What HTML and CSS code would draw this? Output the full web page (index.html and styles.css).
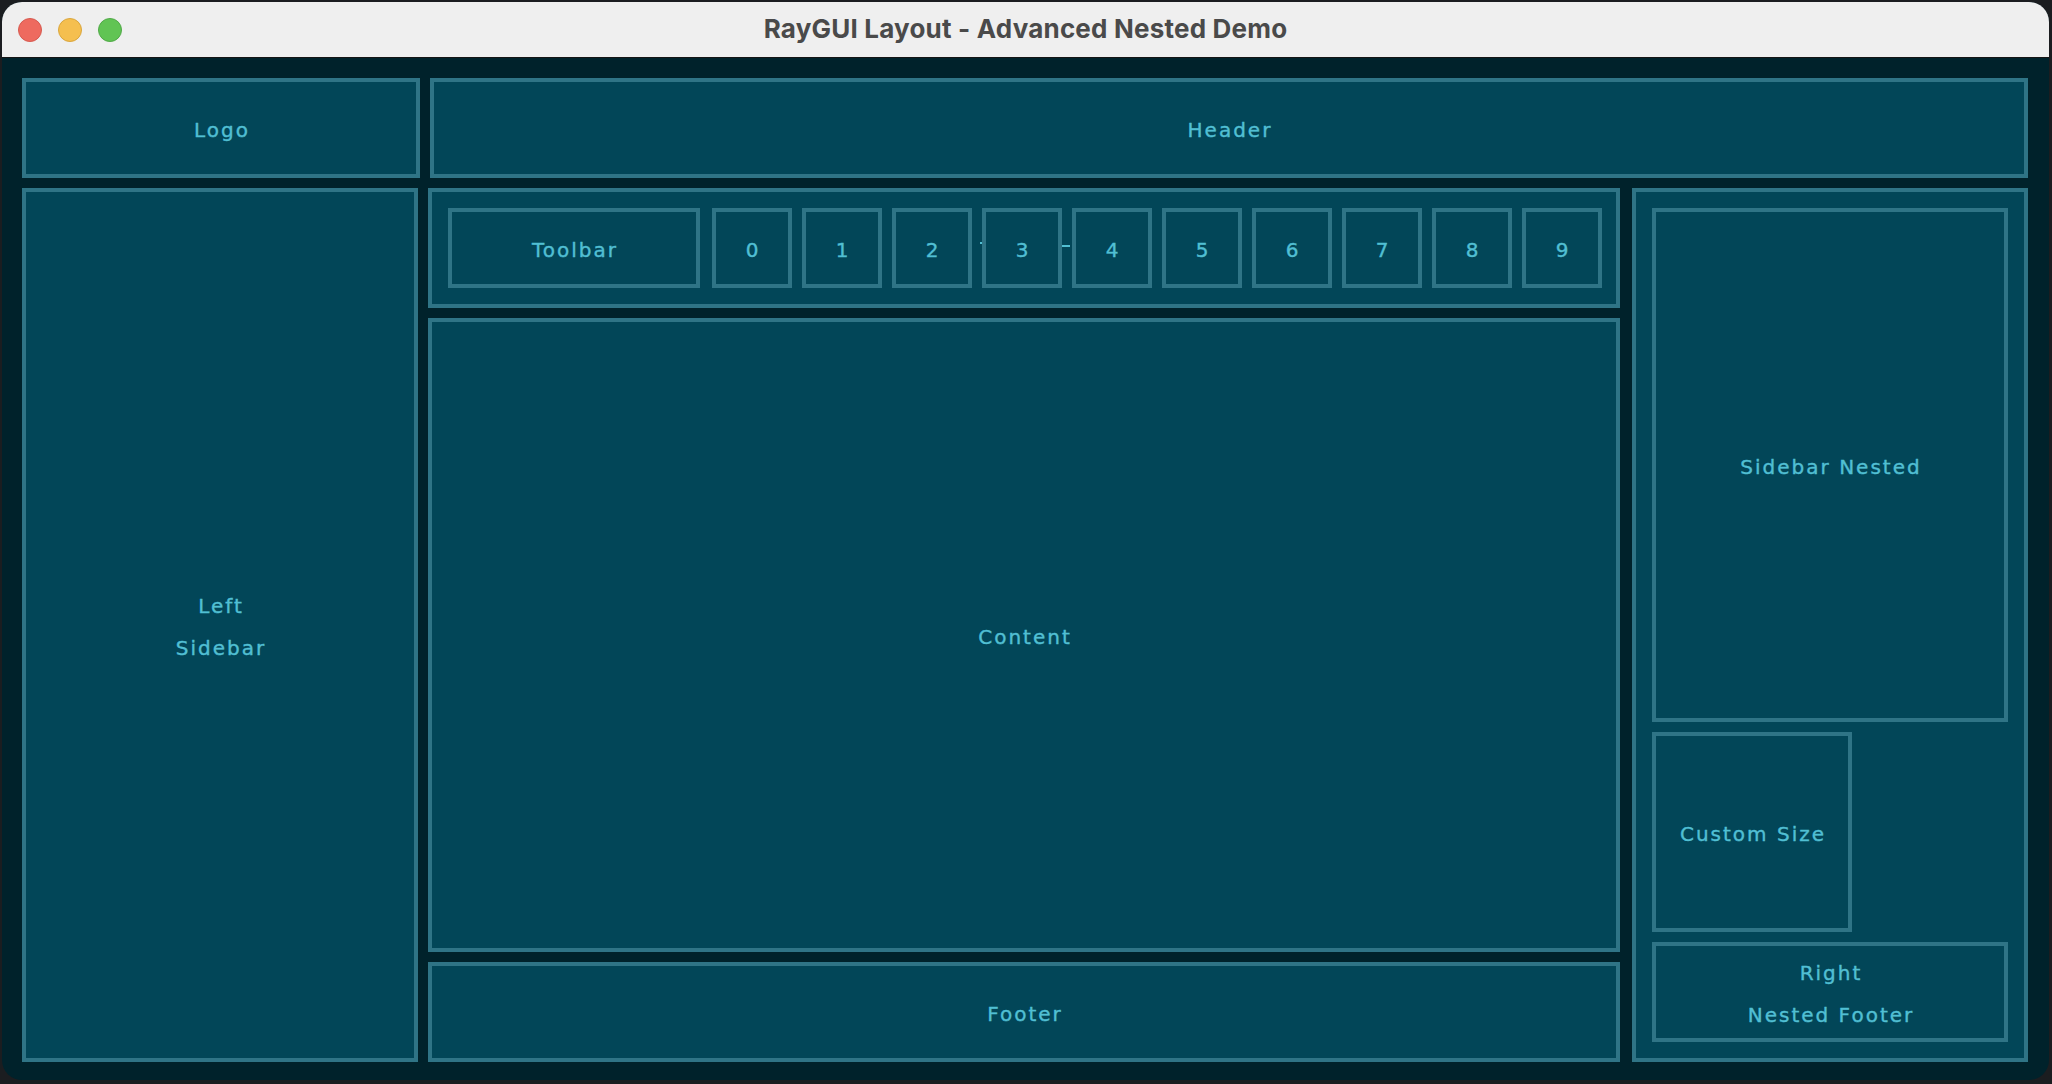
FILE: index.html
```html
<!DOCTYPE html>
<html>
<head>
<meta charset="utf-8">
<title>RayGUI Layout - Advanced Nested Demo</title>
<link rel="stylesheet" href="styles.css">
</head>
<body>
<div class="window">
  <div class="titlebar">
    <div class="lights">
      <span class="light red"></span>
      <span class="light yellow"></span>
      <span class="light green"></span>
    </div>
    <div class="title">RayGUI Layout - Advanced Nested Demo</div>
    <div class="spacer"></div>
  </div>
  <div class="canvas">
    <div class="row-top">
      <div class="panel logo"><span class="label">Logo</span></div>
      <div class="panel header"><span class="label">Header</span></div>
    </div>
    <div class="row-main">
      <div class="panel sidebar"><span class="label multi">Left<br>Sidebar</span></div>
      <div class="middle">
        <div class="panel toolbar">
          <span class="stray stray-a"></span>
          <span class="stray stray-b"></span>
          <div class="panel tool-label"><span class="label">Toolbar</span></div>
          <div class="buttons">
            <div class="panel btn"><span class="label">0</span></div>
            <div class="panel btn"><span class="label">1</span></div>
            <div class="panel btn"><span class="label">2</span></div>
            <div class="panel btn"><span class="label">3</span></div>
            <div class="panel btn"><span class="label">4</span></div>
            <div class="panel btn"><span class="label">5</span></div>
            <div class="panel btn"><span class="label">6</span></div>
            <div class="panel btn"><span class="label">7</span></div>
            <div class="panel btn"><span class="label">8</span></div>
            <div class="panel btn"><span class="label">9</span></div>
          </div>
        </div>
        <div class="panel content"><span class="label">Content</span></div>
        <div class="panel footer"><span class="label">Footer</span></div>
      </div>
      <div class="panel right">
        <div class="panel nested"><span class="label">Sidebar Nested</span></div>
        <div class="panel custom"><span class="label">Custom Size</span></div>
        <div class="panel rfooter"><span class="label multi">Right<br>Nested Footer</span></div>
      </div>
    </div>
  </div>
</div>
</body>
</html>
```

FILE: styles.css
```css
html, body {
  margin: 0;
  padding: 0;
}

body {
  width: 2052px;
  height: 1084px;
  overflow: hidden;
  background: #1b1d20;
}

.window {
  margin: 2px 0 0 2px;
  width: 2047px;
  height: 1078px;
  border-radius: 20px;
  overflow: hidden;
  background: #00222b;
  display: flex;
  flex-direction: column;
}

.titlebar {
  height: 55px;
  flex: 0 0 auto;
  background: #efefef;
  border-bottom: 1px solid #151515;
  display: grid;
  grid-template-columns: 1fr auto 1fr;
  align-items: center;
}

.lights {
  display: flex;
  gap: 16px;
  padding-left: 16px;
}

.light {
  width: 24px;
  height: 24px;
  border-radius: 50%;
  box-sizing: border-box;
}

.red {
  background: #ee6a5f;
  border: 1px solid #d65a50;
}

.yellow {
  background: #f5bf4f;
  border: 1px solid #d9a63e;
}

.green {
  background: #61c454;
  border: 1px solid #51a948;
}

.title {
  font-family: Inter, Roboto, "Liberation Sans", sans-serif;
  font-weight: 700;
  font-size: 26px;
  letter-spacing: 0.2px;
  color: #4a4a4a;
  white-space: nowrap;
  padding-bottom: 2px;
}

.canvas {
  flex: 1 1 auto;
  padding: 20px 21px 18px 20px;
  display: flex;
  flex-direction: column;
  gap: 10px;
}

.panel {
  box-sizing: border-box;
  border: 4px solid #2f7486;
  background: #024658;
  display: flex;
  align-items: center;
  justify-content: center;
  text-align: center;
}

.label {
  font-family: "DejaVu Sans", sans-serif;
  font-size: 20px;
  letter-spacing: 2px;
  padding: 3px 0 0 2px;
  color: #51bfd3;
  -webkit-text-stroke: 0.4px #51bfd3;
  white-space: nowrap;
}

.label.multi {
  line-height: 42px;
}

.row-top {
  display: flex;
  gap: 10px;
  height: 100px;
}

.logo {
  width: 398px;
}

.header {
  flex: 1 1 auto;
}

.row-main {
  display: flex;
  gap: 10px;
  height: 874px;
}

.sidebar {
  width: 396px;
  flex: 0 0 auto;
}

.middle {
  width: 1192px;
  flex: 0 0 auto;
  display: flex;
  flex-direction: column;
  gap: 10px;
}

.toolbar {
  position: relative;
  height: 120px;
  flex: 0 0 auto;
  justify-content: flex-start;
  padding: 0 14px 0 16px;
}

.tool-label {
  width: 252px;
  height: 80px;
  margin-right: 12px;
  flex: 0 0 auto;
}

.buttons {
  display: flex;
  gap: 10px;
}

.btn {
  width: 80px;
  height: 80px;
}

.stray {
  position: absolute;
  background: #51bfd3;
  height: 2px;
}

.stray-a {
  left: 548px;
  top: 50px;
  width: 2px;
}

.stray-b {
  left: 630px;
  top: 53px;
  width: 8px;
}

.content {
  height: 634px;
  flex: 0 0 auto;
}

.footer {
  height: 100px;
  flex: 0 0 auto;
}

.right {
  width: 396px;
  flex: 0 0 auto;
  margin-left: 2px;
  flex-direction: column;
  justify-content: flex-start;
  align-items: stretch;
  padding: 16px;
  gap: 10px;
}

.nested {
  height: 514px;
  flex: 0 0 auto;
}

.custom {
  width: 200px;
  height: 200px;
  flex: 0 0 auto;
  align-self: flex-start;
}

.rfooter {
  height: 100px;
  flex: 0 0 auto;
}
```
